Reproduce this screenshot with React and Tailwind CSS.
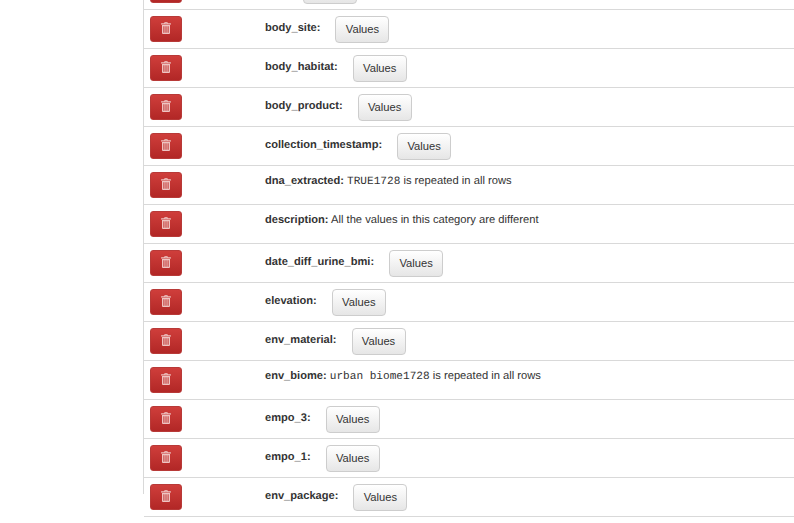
const rows = [
  { name: "age:", values: true },
  { name: "body_site:", values: true },
  { name: "body_habitat:", values: true },
  { name: "body_product:", values: true },
  { name: "collection_timestamp:", values: true },
  { name: "dna_extracted:", code: "TRUE1728", rest: " is repeated in all rows" },
  { name: "description:", rest: " All the values in this category are different" },
  { name: "date_diff_urine_bmi:", values: true },
  { name: "elevation:", values: true },
  { name: "env_material:", values: true },
  { name: "env_biome:", code: "urban biome1728", rest: " is repeated in all rows" },
  { name: "empo_3:", values: true },
  { name: "empo_1:", values: true },
  { name: "env_package:", values: true },
];

function TrashIcon() {
  return (
    <svg width="10" height="12" viewBox="0 0 10 12" className="text-[#eec4c2]" fill="currentColor">
      <path d="M3.2 1.2 3.7 0h2.6l.5 1.2h2.7c.3 0 .5.2.5.5v.8H0v-.8c0-.3.2-.5.5-.5zM4.2 1.2h1.6L5.6.7H4.4z" />
      <path
        fillRule="evenodd"
        d="M1 3h8v8.1c0 .5-.4.9-.9.9H1.900c-.5 0-.9-.4-.9-.9zM2.400 4.200v6.600h1V4.200zm2.100 0v6.600h1V4.200zm2.100 0v6.600h1V4.200z"
      />
    </svg>
  );
}

function Row({ row }) {
  return (
    <div className="flex h-[39px] items-start border-b border-[#d9d9d9] pl-[6px] pt-[6px]">
      <button className="flex h-[26px] w-[32px] shrink-0 items-center justify-center rounded-[3px] border border-[#b83a38] bg-gradient-to-b from-[#cf3e3b] to-[#b22726] pb-[2px]">
        <TrashIcon />
      </button>
      <div className="ml-[83px] flex items-start">
        <p className={`whitespace-nowrap text-[11.2px] leading-[16px] text-[#333] ${row.values ? "mt-[4px]" : "mt-[1px]"}`}>
          <b className="text-[11.1px] font-bold">{row.name}</b>
          {row.code && (
            <>
              {" "}
              <code className="font-['Liberation_Mono',monospace] text-[11.1px]">{row.code}</code>
            </>
          )}
          {row.rest}
        </p>
        {row.values && (
          <button className="ml-[15px] h-[27px] w-[54px] rounded-[4px] border border-[#cdcdcd] bg-gradient-to-b from-white to-[#e6e6e6] pb-[1px] text-[11.2px] text-[#333]">
            Values
          </button>
        )}
      </div>
    </div>
  );
}

export default function App() {
  return (
    <div className="h-[523px] overflow-hidden bg-white font-['Liberation_Sans',Arial,sans-serif] [text-rendering:geometricPrecision]">
      <div className="ml-[143px] h-full border-l border-[#d9d9d9]">
        <div className="-mt-[29px]">
          {rows.map((row) => (
            <Row key={row.name} row={row} />
          ))}
        </div>
      </div>
    </div>
  );
}
